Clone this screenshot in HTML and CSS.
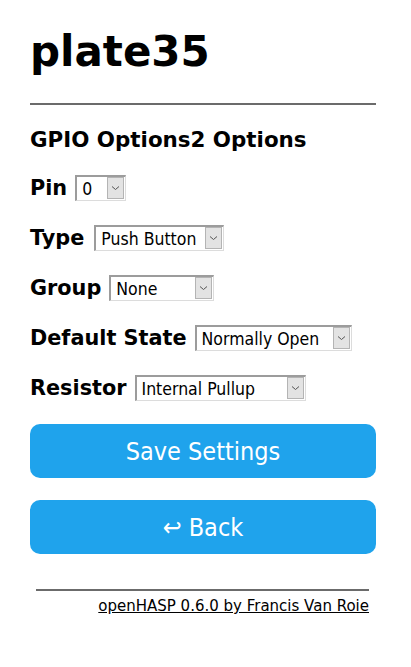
FILE: index.html
```html
<!DOCTYPE html>
<html>
<head>
<meta charset="utf-8">
<link rel="stylesheet" href="styles.css">
</head>
<body>
<div class="wrap">
  <h1 class="title">plate35</h1>
  <hr class="rule">
  <h3 class="section">GPIO Options2 Options</h3>
  <form class="form">
    <div class="row">
      <label class="lbl">Pin</label>
      <span class="sel w-pin"><select class="sel-in"><option>0</option></select><span class="arrow"><svg width="9" height="6" viewBox="0 0 9 6"><path d="M1 1.5 L4.5 4.5 L8 1.5" fill="none" stroke="#555" stroke-width="1"/></svg></span></span>
    </div>
    <div class="row">
      <label class="lbl lbl-type">Type</label>
      <span class="sel w-type"><select class="sel-in"><option>Push Button</option></select><span class="arrow"><svg width="9" height="6" viewBox="0 0 9 6"><path d="M1 1.5 L4.5 4.5 L8 1.5" fill="none" stroke="#555" stroke-width="1"/></svg></span></span>
    </div>
    <div class="row">
      <label class="lbl">Group</label>
      <span class="sel w-group"><select class="sel-in"><option>None</option></select><span class="arrow"><svg width="9" height="6" viewBox="0 0 9 6"><path d="M1 1.5 L4.5 4.5 L8 1.5" fill="none" stroke="#555" stroke-width="1"/></svg></span></span>
    </div>
    <div class="row">
      <label class="lbl">Default State</label>
      <span class="sel w-state"><select class="sel-in"><option>Normally Open</option></select><span class="arrow"><svg width="9" height="6" viewBox="0 0 9 6"><path d="M1 1.5 L4.5 4.5 L8 1.5" fill="none" stroke="#555" stroke-width="1"/></svg></span></span>
    </div>
    <div class="row">
      <label class="lbl">Resistor</label>
      <span class="sel w-res"><select class="sel-in"><option>Internal Pullup</option></select><span class="arrow"><svg width="9" height="6" viewBox="0 0 9 6"><path d="M1 1.5 L4.5 4.5 L8 1.5" fill="none" stroke="#555" stroke-width="1"/></svg></span></span>
    </div>
    <button type="button" class="btn btn-save">Save Settings</button>
    <button type="button" class="btn btn-back">&#8617; Back</button>
  </form>
  <div class="footer">
    <hr class="rule">
    <div class="credit"><a class="credit-link" href="#">openHASP 0.6.0 by Francis Van Roie</a></div>
  </div>
</div>
</body>
</html>
```
FILE: styles.css
```css
html, body {
  margin: 0;
  padding: 0;
  background: #fff;
}
body {
  font-family: "DejaVu Sans", Verdana, sans-serif;
  font-size: 20.8px;
  color: #000;
}
.wrap {
  width: 346px;
  margin-left: 30px;
}
.title {
  font-size: 42px;
  line-height: 48px;
  font-weight: bold;
  margin: 28px 0 27px 0;
}
.rule {
  border: 0;
  height: 2px;
  background: #6b6b6b;
  margin: 0;
}
.section {
  font-size: 21.4px;
  line-height: 24px;
  font-weight: bold;
  margin: 23px 0 23px 0;
}
.form {
  display: flex;
  flex-direction: column;
  align-items: stretch;
}
.row {
  display: flex;
  align-items: center;
  gap: 8px;
  height: 26px;
  margin-bottom: 24px;
}
.lbl {
  font-weight: bold;
  font-size: 20.8px;
  line-height: 26px;
}
.lbl-type {
  margin-right: 2px;
}
.sel {
  display: inline-flex;
  align-items: stretch;
  box-sizing: border-box;
  height: 26px;
  border-style: solid;
  border-width: 2px 1px 1px 2px;
  border-color: #9c9c9c #dcdcdc #dcdcdc #9c9c9c;
  background: #fff;
}
.sel-in {
  appearance: none;
  -webkit-appearance: none;
  border: 0;
  outline: 0;
  background: transparent;
  flex: 1;
  min-width: 0;
  padding: 0 0 0 5px;
  margin: 0;
  font-family: "DejaVu Sans Condensed", "Liberation Sans", sans-serif;
  font-size: 17.5px;
  color: #000;
}
.arrow {
  width: 17px;
  box-sizing: border-box;
  background: #e3e3e3;
  border: 1px solid #b4b4b4;
  margin: 0 1px 1px 0;
  display: flex;
  align-items: center;
  justify-content: center;
}
.w-pin { width: 51px; }
.w-type { width: 130px; }
.w-group { width: 105px; }
.w-state { width: 157px; }
.w-res { width: 171px; }
.btn {
  display: block;
  width: 100%;
  height: 54px;
  border: 0;
  border-radius: 10px;
  background: #1fa3ec;
  color: #fff;
  font-family: "DejaVu Sans Condensed", "Liberation Sans", sans-serif;
  font-size: 25px;
  padding: 0;
  margin: 0;
}
.btn-save {
  margin-top: -1px;
}
.btn-back {
  margin-top: 22px;
}
.footer {
  margin: 35px 7px 0 6px;
}
.credit {
  text-align: right;
  font-size: 15px;
  line-height: 18px;
  margin-top: 6px;
}
.credit-link {
  color: #000;
  text-decoration: underline;
}
```
